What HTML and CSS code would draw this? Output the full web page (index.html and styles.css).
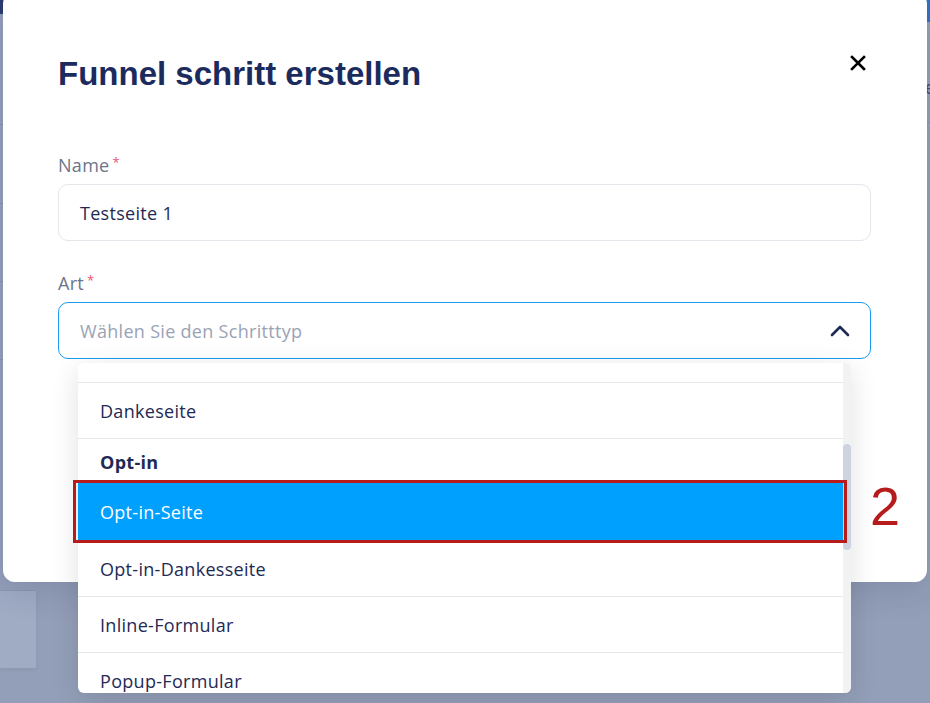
FILE: index.html
```html
<!DOCTYPE html>
<html lang="de">
<head>
<meta charset="utf-8">
<title>Funnel schritt erstellen</title>
<link rel="stylesheet" href="styles.css">
</head>
<body>
<div class="backdrop">
  <div class="bg-corner"></div>
  <div class="bg-topbar"></div>
  <div class="bg-text">e</div>
  <div class="bg-line l1"></div>
  <div class="bg-line l2"></div>
  <div class="bg-line l3"></div>
  <div class="bg-line l4"></div>
  <div class="bg-line l5"></div>
  <div class="bg-panel"></div>
</div>

<div class="modal">
  <header class="modal-head">
    <h1 class="modal-title">Funnel schritt erstellen</h1>
    <button class="close" aria-label="Schließen">
      <svg width="16" height="16" viewBox="0 0 16 16"><path d="M2 2 L14 14 M14 2 L2 14" stroke="#000" stroke-width="2.6" stroke-linecap="square" fill="none"/></svg>
    </button>
  </header>

  <div class="field">
    <label class="label">Name<span class="req">*</span></label>
    <div class="input">Testseite 1</div>
  </div>

  <div class="field field-art">
    <label class="label">Art<span class="req">*</span></label>
    <div class="select">
      <span class="placeholder">Wählen Sie den Schritttyp</span>
      <svg class="chevron" width="20" height="12" viewBox="0 0 20 12"><path d="M2 10 L10 2 L18 10" stroke="#1e2a55" stroke-width="2.6" fill="none" stroke-linecap="round" stroke-linejoin="round"/></svg>
    </div>
    <div class="dropdown">
      <ul class="options">
        <li class="opt-rest"></li>
        <li class="opt">Dankeseite</li>
        <li class="group">Opt-in</li>
        <li class="opt active">Opt-in-Seite</li>
        <li class="opt">Opt-in-Dankesseite</li>
        <li class="opt">Inline-Formular</li>
        <li class="opt">Popup-Formular</li>
      </ul>
      <div class="scrollbar"><div class="thumb"></div></div>
    </div>
  </div>
</div>

<div class="annot-box"></div>
<div class="annot-num">2</div>
</body>
</html>
```

FILE: styles.css
```css
* { box-sizing: border-box; }

html, body {
  margin: 0;
  padding: 0;
  width: 930px;
  height: 703px;
  overflow: hidden;
}

body {
  background: #939eb8;
  font-family: "Open Sans", Lato, sans-serif;
  position: relative;
}

/* faint page behind the overlay */
.backdrop { position: absolute; inset: 0; }
.bg-corner { position: absolute; left: 0; top: 0; width: 6px; height: 14px; background: #2a3c6e; border-radius: 0 0 3px 0; }
.bg-topbar { position: absolute; right: 0; top: 0; width: 6px; height: 22px; background: #2f73c4; }
.bg-text { position: absolute; left: 925px; top: 78px; font: 18px "Liberation Sans", sans-serif; color: #3d4f7a; overflow: hidden; width: 5px; }
.bg-line { position: absolute; height: 1px; background: #8490ab; }
.l1 { left: 0; top: 124px; width: 4px; }
.l2 { left: 0; top: 203px; width: 4px; }
.l3 { left: 0; top: 281px; width: 4px; }
.l4 { left: 0; top: 359px; width: 4px; }
.l5 { right: 0; top: 122px; width: 4px; }
.bg-panel { position: absolute; left: 0; top: 590px; width: 36px; height: 78px; background: #a0abc4; border-top: 1px solid #8c97b1; box-shadow: 0 2px 4px rgba(0,0,0,0.05); }

/* modal */
.modal {
  position: absolute;
  left: 3px;
  top: -8px;
  width: 924px;
  height: 590px;
  background: #fff;
  border-radius: 12px;
  box-shadow: 0 12px 30px rgba(30, 40, 80, 0.12);
  padding: 62px 56px 0 55px;
}

.modal-head {
  display: flex;
  justify-content: space-between;
  align-items: flex-start;
  margin-bottom: 59px;
}

.modal-title {
  margin: 0;
  font-family: "Liberation Sans", Arial, sans-serif;
  font-weight: 700;
  font-size: 33px;
  line-height: 40px;
  color: #1c2b5e;
}

.close {
  border: 0;
  background: none;
  padding: 0;
  margin: 1px 5px 0 0;
  width: 16px;
  height: 16px;
  display: flex;
}

.field { position: relative; margin-bottom: 30px; }

.label {
  display: block;
  font-size: 18px;
  line-height: 24px;
  color: #6b7589;
  margin-bottom: 7px;
  letter-spacing: 0.3px;
}

.req { color: #f0506e; font-size: 13px; vertical-align: top; margin-left: 3px; line-height: 18px; }

.input, .select {
  height: 57px;
  border: 1px solid #e3e6ea;
  border-radius: 10px;
  padding: 0 21px;
  display: flex;
  align-items: center;
  font-size: 18px;
  color: #1e2a55;
  letter-spacing: 0.3px;
}

.select {
  border-color: #1a9bef;
  justify-content: space-between;
  padding-right: 20px;
}

.placeholder { color: #9aa3b5; }

.dropdown {
  position: absolute;
  left: 20px;
  top: 92px;
  width: 773px;
  height: 330px;
  background: #fff;
  border-radius: 6px;
  box-shadow: 0 6px 28px rgba(0, 0, 0, 0.12);
  overflow: hidden;
  display: flex;
}

.options {
  list-style: none;
  margin: 0;
  padding: 0;
  flex: 1;
}

.opt-rest { height: 19px; }

.opt, .group {
  padding: 0 22px;
  display: flex;
  align-items: center;
  font-size: 18px;
  color: #1e2a55;
  letter-spacing: 0.3px;
}

.opt { height: 56px; border-top: 1px solid #e4e6ea; }

.group {
  height: 45px;
  border-top: 1px solid #e4e6ea;
  font-weight: 700;
  padding-top: 1px;
}

.opt.active {
  background: #00a0ff;
  color: #fff;
  border-top: 0;
  height: 57px;
}

.scrollbar {
  width: 8px;
  background: #f1f2f4;
  position: relative;
}

.thumb {
  position: absolute;
  left: 0;
  top: 81px;
  width: 8px;
  height: 106px;
  background: #cdd3df;
  border-radius: 4px;
}

/* annotation overlay */
.annot-box {
  position: absolute;
  left: 73px;
  top: 480px;
  width: 774px;
  height: 63px;
  border: 3px solid #b71c1c;
}

.annot-num {
  position: absolute;
  left: 870px;
  top: 474px;
  font-family: "Liberation Sans", Arial, sans-serif;
  font-size: 54px;
  line-height: 64px;
  color: #b71c1c;
}
```
